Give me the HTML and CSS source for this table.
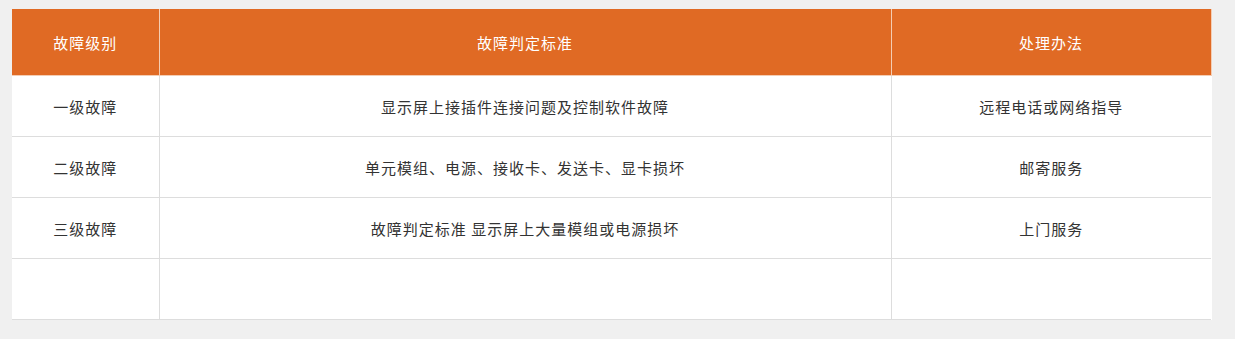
FILE: index.html
```html
<!DOCTYPE html>
<html lang="zh">
<head>
<meta charset="utf-8">
<link rel="stylesheet" href="styles.css">
</head>
<body>
<div class="wrap">
<table class="fault">
<colgroup><col class="c1"><col class="c2"><col class="c3"></colgroup>
<thead>
<tr><th>故障级别</th><th>故障判定标准</th><th>处理办法</th></tr>
</thead>
<tbody>
<tr><td>一级故障</td><td>显示屏上接插件连接问题及控制软件故障</td><td>远程电话或网络指导</td></tr>
<tr><td>二级故障</td><td>单元模组、电源、接收卡、发送卡、显卡损坏</td><td>邮寄服务</td></tr>
<tr><td>三级故障</td><td>故障判定标准 显示屏上大量模组或电源损坏</td><td>上门服务</td></tr>
<tr><td></td><td></td><td></td></tr>
</tbody>
</table>
</div>
</body>
</html>
```
FILE: styles.css
```css
html, body { margin: 0; padding: 0; background: #f0f0f0; }
.wrap { padding: 9px 0 0 12px; }
.fault {
  width: 1199px;
  border-collapse: collapse;
  table-layout: fixed;
  background: #fff;
  font-family: "Noto Sans CJK SC", "Noto Sans", sans-serif;
  font-size: 15px;
  letter-spacing: 1px;
  color: #333;
}
.c1 { width: 147px; }
.c2 { width: 732px; }
.c3 { width: 320px; }
.fault th {
  background: #e06a24;
  color: #fff;
  font-weight: normal;
  height: 66px;
  padding: 0;
  border-right: 1px solid #f4cdb3;
  border-bottom: 1px solid #f4cdb3;
  text-align: center;
}
.fault td {
  height: 60px;
  padding: 0;
  text-align: center;
  border-right: 1px solid #dddddd;
  border-bottom: 1px solid #dddddd;
}
.fault td:last-child { border-right: none; }
```
